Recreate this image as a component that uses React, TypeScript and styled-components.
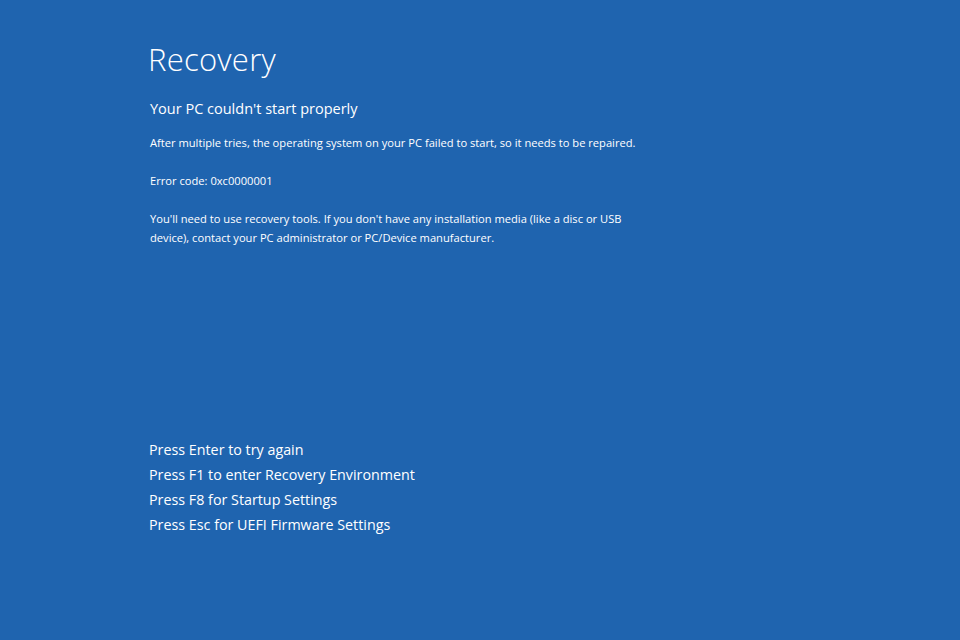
import React from "react";
import styled, { createGlobalStyle } from "styled-components";

const Global = createGlobalStyle`
  html, body { margin: 0; padding: 0; background: #1f64af; }
  body { font-family: "Open Sans", "Noto Sans", sans-serif; color: #fff; }
`;

const Screen = styled.div`
  width: 960px;
  height: 640px;
  background: #1f64af;
  box-sizing: border-box;
  padding: 39px 0 0 148px;
  display: flex;
  flex-direction: column;
`;

const Title = styled.h1`
  margin: 0;
  font-weight: 300;
  font-size: 31px;
  line-height: 40px;
  letter-spacing: 0.25px;
`;

const Subtitle = styled.h2`
  margin: 20px 0 0 2px;
  font-weight: 400;
  font-size: 14.5px;
  line-height: 20px;
`;

const Body = styled.div`
  margin: 13.5px 0 0 2px;
  font-size: 11.15px;
  line-height: 19px;
  width: 490px;
  display: flex;
  flex-direction: column;
  gap: 19px;
`;

const P = styled.p`
  margin: 0;
`;

const Options = styled.div`
  margin-top: auto;
  margin-bottom: 103px;
  margin-left: 1px;
  display: flex;
  flex-direction: column;
  font-size: 14.3px;
  line-height: 25px;
`;

export default function App() {
  return (
    <>
      <Global />
      <Screen>
        <Title>Recovery</Title>
        <Subtitle>Your PC couldn't start properly</Subtitle>
        <Body>
          <P>After multiple tries, the operating system on your PC failed to start, so it needs to be repaired.</P>
          <P>Error code: 0xc0000001</P>
          <P>You'll need to use recovery tools. If you don't have any installation media (like a disc or USB device), contact your PC administrator or PC/Device manufacturer.</P>
        </Body>
        <Options>
          <span>Press Enter to try again</span>
          <span>Press F1 to enter Recovery Environment</span>
          <span>Press F8 for Startup Settings</span>
          <span>Press Esc for UEFI Firmware Settings</span>
        </Options>
      </Screen>
    </>
  );
}
